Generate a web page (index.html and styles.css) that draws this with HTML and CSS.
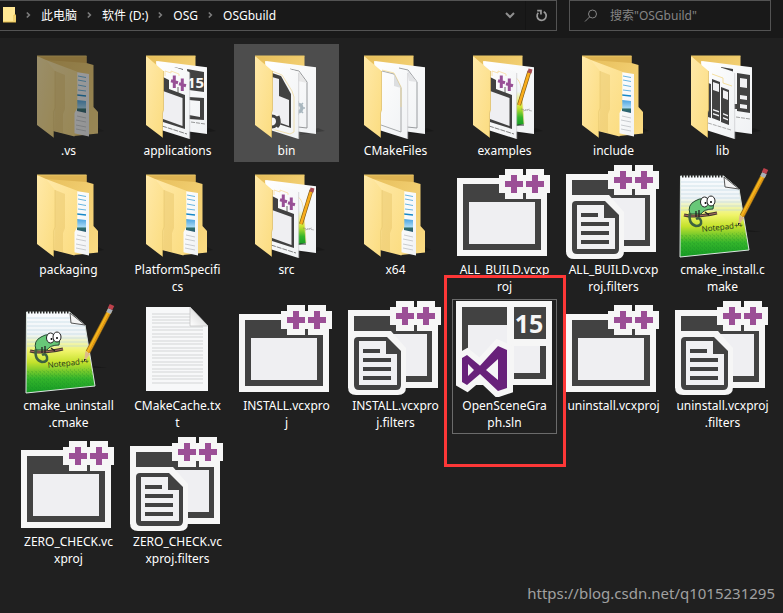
FILE: index.html
```html
<!DOCTYPE html>
<html lang="zh-CN">
<head>
<meta charset="utf-8">
<title>OSGbuild</title>
<link rel="stylesheet" href="styles.css">
</head>
<body>
<svg class="defs" aria-hidden="true">
  <defs>
    <linearGradient id="flap" x1="0" y1="0" x2="1" y2="1"><stop offset="0" stop-color="#ffe9a8"/><stop offset="1" stop-color="#fbdc80"/></linearGradient>
    <linearGradient id="back" x1="0" y1="0" x2="1" y2="1"><stop offset="0" stop-color="#e6bd59"/><stop offset="1" stop-color="#fbdc84"/></linearGradient>
    <linearGradient id="paper" x1="0" y1="0" x2="1" y2="1"><stop offset="0" stop-color="#ffffff"/><stop offset="1" stop-color="#f0f2f4"/></linearGradient>
    <linearGradient id="photo" x1="0" y1="0" x2="0" y2="1"><stop offset="0" stop-color="#4aa3df"/><stop offset=".6" stop-color="#a5d8f5"/><stop offset=".7" stop-color="#2f6f6a"/><stop offset="1" stop-color="#2a5a75"/></linearGradient>
    <linearGradient id="grass" x1="0" y1="0" x2="0" y2="1"><stop offset="0" stop-color="#fafcff"/><stop offset=".28" stop-color="#eff4f6"/><stop offset=".48" stop-color="#f0f46a"/><stop offset=".62" stop-color="#c5e22c"/><stop offset=".82" stop-color="#35b52c"/><stop offset="1" stop-color="#149a24"/></linearGradient>
    <linearGradient id="fold" x1="0" y1="1" x2="1" y2="0"><stop offset="0" stop-color="#ffffff"/><stop offset="1" stop-color="#c9c9c9"/></linearGradient>
    <pattern id="speck" width="4" height="4" patternUnits="userSpaceOnUse"><path d="M0 1h1M2 3h1M3 0h1" stroke="#0b7d1e" stroke-width="1" opacity=".35"/></pattern>

    <symbol id="folder-files" viewBox="0 0 105 96">
      <path d="M58 92l30-5-6-3z" fill="#191919"/>
      <path d="M21 12H70.500V19L77.500 21V63L82 68V89.500L58 92V60L21 20z" fill="url(#back)"/>
      <path d="M21 12H70.500V19L30 16z" fill="#ddb352"/>
      <path d="M60 28L73 30V92.500L57 89z" fill="url(#paper)"/>
      <path d="M62 32l8 1.500M62 36l8 1.500M62 41l8 1.500M62 46l8 1" stroke="#68b5e0"/>
      <path d="M61 51l9 1" stroke="#1688c9" stroke-width="1.500"/>
      <path d="M61 56l9 1V69l-9-2z" fill="url(#photo)"/>
      <path d="M61 72l9 2M60 76l10 2M60 81l10 2M60 85l10 2" stroke="#bcc0c4" stroke-width=".8"/>
      <path d="M30 16L61.300 27.700V64L58.500 69V92.500L37 87z" fill="url(#flap)"/>
      <path d="M39 27L49 31V65L47 70V89L38 87z" fill="#e6c467" opacity=".45"/>
      <path d="M21 12L30 16 39 27V64L37.500 68V93.600L21 81z" fill="url(#flap)"/>
      <path d="M39 27V64L37.500 68V93.600" fill="none" stroke="#e3c268" stroke-width=".5"/>
      <path d="M21 12H70.500" stroke="#e9c767"/>
    </symbol>

    <symbol id="folder-back" viewBox="0 0 105 96">
      <path d="M64 91l27-4-7-3z" fill="#000" opacity=".2"/>
      <path d="M21 12H70.500V30L37 60z" fill="url(#back)"/>
      <path d="M32 17L82 23.300V90L60 87z" fill="url(#paper)"/>
    </symbol>
    <symbol id="folder-sheet" viewBox="0 0 105 96">
      <path d="M31 17L64.500 28V95L36 86z" fill="url(#paper)"/>
      <path d="M64.700 29V95" stroke="#c9c9cb" stroke-width=".7"/>
    </symbol>
    <symbol id="folder-flap" viewBox="0 0 105 96">
      <path d="M21 12L38.500 27V66L37.500 69V93.500L21 81z" fill="url(#flap)"/>
      <path d="M38.500 27V66L37.500 69V93.500" fill="none" stroke="#dcba60" stroke-width=".7"/>
      <path d="M21 12H70.500" stroke="#e9c767"/>
    </symbol>
    <symbol id="mini-project" viewBox="0 0 105 96">
      <path d="M40 32v-5l6 2v-2l8 3v2" fill="none" stroke="#f8dda0" stroke-width=".8"/>
      <path d="M38 33L44 36V45L60 51V85L38 78z" fill="#414141"/>
      <path d="M38 47L57.500 54V82L38 75z" fill="#efeff2"/>
      <path d="M53 43v6" stroke="#414141" stroke-width=".8"/>
      <path d="M49.300 31.500V44M46 36.800l7 2M57.300 34.500V47M54 39.800l7 2" stroke="#985096" stroke-width="3"/>
      <path d="M37 82L62 90" stroke="#333" stroke-width=".6" stroke-dasharray="5 1"/>
    </symbol>
    <symbol id="mini-notepad" viewBox="0 0 105 96">
      <path d="M64 34q5 2 6 18l2 28-8 2z" fill="url(#grass)"/>
      <path d="M64 34q5 2 6 18l2 28" fill="none" stroke="#f2d98e" stroke-width=".7"/>
      <path d="M64 81l8 0" stroke="#333"/>
      <path d="M77.500 27L67 61" stroke="#7b591b" stroke-width="4"/>
      <path d="M77.500 27L67 61" stroke="#f8ad1b" stroke-width="2.600"/>
      <path d="M78.500 25l-1 4" stroke="#a84c54" stroke-width="4"/>
      <path d="M69 65l11 2M71 67l7-2" stroke="#777" stroke-width=".5" stroke-dasharray="3 1"/>
    </symbol>

    <symbol id="folder-solution" viewBox="0 0 105 96">
      <use href="#folder-back"/>
      <path d="M49 23l9 2v3l-9-3z" fill="#414141"/>
      <path d="M62 25L79 28V48L64 46z" fill="#414141"/>
      <text class="mini-version" x="62" y="44">15</text>
      <path d="M64 53L79 54V76L64 75V71L75 73V57L64 56z" fill="#414141"/>
      <path d="M66 78l14 2" stroke="#555" stroke-width=".6" stroke-dasharray="4 1"/>
      <use href="#folder-sheet"/><use href="#mini-project"/><use href="#folder-flap"/>
    </symbol>
    <symbol id="folder-bin" viewBox="0 0 105 96">
      <use href="#folder-back"/>
      <path d="M56 25l9 2 8 11v46l-9-1" fill="none" stroke="#8b8d90" stroke-width=".9"/>
      <path d="M64 27l9 12-9-2z" fill="#e8e8e8"/>
      <circle cx="64" cy="64" r="4" fill="none" stroke="#a9b7bf" stroke-width="3"/>
      <path d="M64 57v14M57 64h14M59 59l10 10M69 59L59 69" stroke="#a9b7bf" stroke-width="1.500"/>
      <circle cx="64" cy="64" r="2" fill="#f4f5f6"/>
      <use href="#folder-sheet"/>
      <path d="M38 27l10 4 10 16 2 6v35l-4 2-18-5" fill="none" stroke="#eed693" stroke-width=".7"/>
      <path d="M38 29l9 3 10 18v34l-19-6z" fill="#414141"/>
      <path d="M38 33l7 2v17l10 4v26l-17-6z" fill="#efeff2"/>
      <circle cx="38" cy="77" r="9" fill="#f5f5f6"/>
      <path d="M38 72a5 5 0 0 1 0 11M43 83q4-4 1-11" fill="none" stroke="#414141" stroke-width="3"/>
      <use href="#folder-flap"/>
    </symbol>
    <symbol id="folder-cmake" viewBox="0 0 105 96">
      <use href="#folder-back"/>
      <path d="M56 24l9 2 9 12v46l-10-1" fill="none" stroke="#909396" stroke-width=".9"/>
      <path d="M64 26l10 12-8-1z" fill="#e2e3e5"/>
      <use href="#folder-sheet"/>
      <path d="M39 27l12 3 7 14v44l-20-7" fill="none" stroke="#929598" stroke-width=".8"/>
      <path d="M39 26l12 3 7 14v20" fill="none" stroke="#f4d98a" stroke-width=".7"/>
      <path d="M51 30v12l7 2z" fill="#dcdee0"/>
      <use href="#folder-flap"/>
    </symbol>
    <symbol id="folder-source" viewBox="0 0 105 96">
      <use href="#folder-back"/><use href="#mini-notepad"/><use href="#folder-sheet"/><use href="#mini-project"/><use href="#folder-flap"/>
    </symbol>
    <symbol id="folder-lib" viewBox="0 0 105 96">
      <use href="#folder-back"/>
      <path d="M51 23l12 2v5l-12-4zM67 29l13 2v38l-13-2zM64 60h3v5h-3z" fill="#414141"/>
      <path d="M70 34l7 1v9l-7-1zM70 51l7 1v4l-7-1zM70 60l7 1v4l-7-1z" fill="#f1f1f3"/>
      <path d="M66 73l14 2" stroke="#666" stroke-width=".6" stroke-dasharray="4 1"/>
      <use href="#folder-sheet"/>
      <path d="M38 39l3 1v34l-3-1zM42 35l8 3v39l-8-3zM51 43l8 3v35l-8-3z" fill="#414141"/>
      <path d="M43 38l6 2v8l-6-2zM53 46l5 2v8l-5-2zM43 65l6 2v1.500l-6-2zM43 69l6 2v1.500l-6-2zM53 69l5 2v1.500l-5-2zM53 73l5 2v1.500l-5-2z" fill="#f1f1f3"/>
      <path d="M42 30l11 4v5l9 3" fill="none" stroke="#f4d98a" stroke-width=".8"/>
      <path d="M38 79l23 7" stroke="#777" stroke-width=".6" stroke-dasharray="4 1"/>
      <use href="#folder-flap"/>
    </symbol>

    <symbol id="plusplus" viewBox="0 0 105 96">
      <path d="M53 6H71V12H74V6H92V12H98V30H92V36H74V30H71V36H53V30H47V12H53z" fill="#f6f6f6"/>
      <path d="M59 12H65V18H71V24H65V30H59V24H53V18H59zM80 12H86V18H92V24H86V30H80V24H74V18H80z" fill="#9b4f96"/>
    </symbol>
    <symbol id="project" viewBox="0 0 105 96">
      <path d="M5 15H95V93H5z" fill="#f6f6f6"/><path d="M11 21H89V87H11z" fill="#424242"/><path d="M17 39H83V81H17z" fill="#efeff2"/>
      <use href="#plusplus"/>
    </symbol>
    <symbol id="filters" viewBox="0 0 105 96">
      <path d="M5 11H95V89H5z" fill="#f6f6f6"/><path d="M11 17H89V83H11z" fill="#424242"/><path d="M17 35H84V77H17z" fill="#efeff2"/>
      <path d="M11 32H48L63 49V88Q63 96 55 96H13Q5 96 5 88V32z" fill="#f6f6f6"/>
      <path d="M15 38H44L58 52V86Q58 91 53 91H16Q11 91 11 86V42Q11 38 15 38z" fill="#424242"/>
      <path d="M16 42H43V55H54V86H16z" fill="#f1f1f3"/>
      <path d="M20 50H37V54H20zM20 59H48V63H20zM20 68H48V72H20zM20 77H48V81H20z" fill="#424242"/>
      <use href="#plusplus" y="-4"/>
    </symbol>
    <symbol id="solution" viewBox="0 0 105 98">
      <path d="M4 2H100V86H4z" fill="#f6f6f6"/><path d="M10 8H94V80H10z" fill="#424242"/><path d="M16 26H88V74H16z" fill="#efeff2"/>
      <path d="M55 2H100V47H55z" fill="#f6f6f6"/><path d="M62 8H94V40H62z" fill="#424242"/>
      <path d="M55 40H62V86H55z" fill="#f6f6f6"/>
      <text class="version" x="77" y="34">15</text>
      <path d="M10 59L15 56 28 66.700 46 47 55 51V89L46 92 28 75 15 86 10 83z" fill="#f6f6f6" stroke="#f6f6f6" stroke-width="12"/>
      <path fill-rule="evenodd" d="M10 59L15 56 28 66.700 46 47 55 51V89L46 92 28 75 15 86 10 83zM16 65V77L22 71zM46 60L34 71 46 81z" fill="#68217a"/>
    </symbol>
    <symbol id="notepad" viewBox="0 0 105 96">
      <path d="M65 65l26 4-20 0z" fill="#191919"/>
      <path d="M10.500 13H53.500L69 26 79 87 10 94z" fill="url(#grass)" stroke="#dbe5e0"/>
      <path d="M11 72l65-3 2 17-67 7z" fill="url(#speck)"/>
      <path d="M11 19h46M11 23h50M11 27h58M11 31h58M11 35h59M11 39h60M11 43h60M11 47h61" stroke="#b9d3e0" stroke-width=".6"/>
      <path d="M12 13h41" stroke="#292929" stroke-width="3" stroke-dasharray="1.500 1.500"/>
      <path d="M54 14l1 10 14 2z" fill="#f4f4f4" stroke="#555"/>
      <path d="M14 52q11 3 33-2" fill="none" stroke="#443a30" stroke-width="3"/>
      <path d="M14 52q11 3 33-2" fill="none" stroke="#aa6d62" stroke-width="1"/>
      <path d="M20 51q-3-9 5-13 8-5 16 0 4 3 2 8-9 0-12 5z" fill="#68c878" stroke="#244b31"/>
      <path d="M20 50q-2 11 6 13 6 0 5-5-1-4-5-2" fill="none" stroke="#3d6240" stroke-width="2.500"/>
      <path d="M26 48v6m3-7v7m6-5l4 3" stroke="#222" stroke-width="1.300"/>
      <ellipse cx="34.500" cy="39" rx="4" ry="5" fill="#fff" stroke="#222"/>
      <ellipse cx="41" cy="38" rx="4" ry="5" fill="#fff" stroke="#222"/>
      <circle cx="35.500" cy="40" r="1"/><circle cx="41" cy="39" r="1"/>
      <text class="notepad-word" x="32" y="69" transform="rotate(-6 32 69)">Notepad++</text>
      <path d="M94 11L72 53" stroke="#9c7018" stroke-width="5"/><path d="M94 11L72 53" stroke="#f4b41b" stroke-width="3.500"/>
      <path d="M93 15L72 55" stroke="#de8c12"/>
      <path d="M69.500 52l4.500 3-6 8z" fill="#deb98a"/><path d="M68 60l2 0-2 3z" fill="#222"/>
      <path d="M94.500 10l-2 4" stroke="#a8b0b8" stroke-width="5"/><path d="M96 6l-2 4" stroke="#bd414b" stroke-width="5"/>
    </symbol>
    <symbol id="textfile" viewBox="0 0 105 96">
      <path d="M21 8H65L83 27V92H21z" fill="#f7f8f9"/>
      <path d="M27 15H65M27 18H65M27 21H65M27 24H65M27 28H78M27 31H78M27 35H78M27 38H78M27 42H78M27 45H78M27 49H78M27 52H78M27 56H78M27 59H78M27 63H78M27 66H78M27 70H78M27 73H78M27 77H78M27 80H78M27 84H78" stroke="#d3d5d6"/>
      <path d="M65 8V27H83z" fill="url(#fold)" stroke="#c0c0c0" stroke-width=".7"/>
    </symbol>
  </defs>
</svg>

<header class="toolbar">
  <nav class="address" aria-label="地址">
    <svg class="address-folder" viewBox="0 0 13 18" aria-hidden="true"><path d="M0 1H12V9H13V16H0z" fill="#ffe794"/><path d="M0 16H13V9H11V15" fill="none" stroke="#e4bc4e"/></svg>
    <svg class="chevron" viewBox="0 0 6 8"><path d="M1 1l3 3-3 3"/></svg>
    <a href="#">此电脑</a>
    <svg class="chevron" viewBox="0 0 6 8"><path d="M1 1l3 3-3 3"/></svg>
    <a href="#">软件 (D:)</a>
    <svg class="chevron" viewBox="0 0 6 8"><path d="M1 1l3 3-3 3"/></svg>
    <a href="#">OSG</a>
    <svg class="chevron" viewBox="0 0 6 8"><path d="M1 1l3 3-3 3"/></svg>
    <a href="#">OSGbuild</a>
    <button class="tool history" aria-label="历史记录"><svg viewBox="0 0 12 12" width="12" height="12"><path d="M2 4l4 4 4-4" fill="none" stroke="#8f8f8f" stroke-width="2"/></svg></button>
    <button class="tool refresh" aria-label="刷新"><svg viewBox="0 0 12 12" width="13" height="13"><path d="M8 2.500A4.200 4.200 0 1 1 3 3.500M2 1.500H5.500V5" fill="none" stroke="#9a9a9a" stroke-width="1.600"/></svg></button>
  </nav>
  <label class="search">
    <svg viewBox="0 0 14 14" width="14" height="14" aria-hidden="true"><circle cx="8.500" cy="5" r="4" fill="none" stroke="#858585"/><path d="M5.500 8L1 12.500" stroke="#858585"/></svg>
    <input type="text" aria-label="搜索" placeholder='搜索"OSGbuild"'>
  </label>
</header>

<main class="files-pane">
  <ul class="files">
    <li><button class="file hidden-file"><svg class="icon" viewBox="0 0 105 96"><use href="#folder-files"/></svg><span>.vs</span></button></li>
    <li><button class="file"><svg class="icon" viewBox="0 0 105 96"><use href="#folder-solution"/></svg><span>applications</span></button></li>
    <li><button class="file hovered"><svg class="icon" viewBox="0 0 105 96"><use href="#folder-bin"/></svg><span>bin</span></button></li>
    <li><button class="file"><svg class="icon" viewBox="0 0 105 96"><use href="#folder-cmake"/></svg><span>CMakeFiles</span></button></li>
    <li><button class="file"><svg class="icon" viewBox="0 0 105 96"><use href="#folder-source"/></svg><span>examples</span></button></li>
    <li><button class="file"><svg class="icon" viewBox="0 0 105 96"><use href="#folder-files"/></svg><span>include</span></button></li>
    <li><button class="file"><svg class="icon" viewBox="0 0 105 96"><use href="#folder-lib"/></svg><span>lib</span></button></li>

    <li><button class="file"><svg class="icon" viewBox="0 0 105 96"><use href="#folder-files"/></svg><span>packaging</span></button></li>
    <li><button class="file"><svg class="icon" viewBox="0 0 105 96"><use href="#folder-files"/></svg><span>PlatformSpecifi<br>cs</span></button></li>
    <li><button class="file"><svg class="icon" viewBox="0 0 105 96"><use href="#folder-source"/></svg><span>src</span></button></li>
    <li><button class="file"><svg class="icon" viewBox="0 0 105 96"><use href="#folder-files"/></svg><span>x64</span></button></li>
    <li><button class="file"><svg class="icon" viewBox="0 0 105 96"><use href="#project"/></svg><span>ALL_BUILD.vcxp<br>roj</span></button></li>
    <li><button class="file"><svg class="icon" viewBox="0 0 105 96"><use href="#filters"/></svg><span>ALL_BUILD.vcxp<br>roj.filters</span></button></li>
    <li><button class="file"><svg class="icon" viewBox="0 0 105 96"><use href="#notepad"/></svg><span>cmake_install.c<br>make</span></button></li>

    <li><button class="file"><svg class="icon" viewBox="0 0 105 96"><use href="#notepad"/></svg><span>cmake_uninstall<br>.cmake</span></button></li>
    <li><button class="file"><svg class="icon" viewBox="0 0 105 96"><use href="#textfile"/></svg><span>CMakeCache.tx<br>t</span></button></li>
    <li><button class="file"><svg class="icon" viewBox="0 0 105 96"><use href="#project"/></svg><span>INSTALL.vcxpro<br>j</span></button></li>
    <li><button class="file"><svg class="icon" viewBox="0 0 105 96"><use href="#filters"/></svg><span>INSTALL.vcxpro<br>j.filters</span></button></li>
    <li class="marked"><button class="file focused"><svg class="icon" viewBox="0 0 105 96"><use href="#solution" width="105" height="98"/></svg><span>OpenSceneGra<br>ph.sln</span></button></li>
    <li><button class="file"><svg class="icon" viewBox="0 0 105 96"><use href="#project"/></svg><span>uninstall.vcxproj</span></button></li>
    <li><button class="file"><svg class="icon" viewBox="0 0 105 96"><use href="#filters"/></svg><span>uninstall.vcxproj<br>.filters</span></button></li>

    <li><button class="file"><svg class="icon" viewBox="0 0 105 96"><use href="#project"/></svg><span>ZERO_CHECK.vc<br>xproj</span></button></li>
    <li><button class="file"><svg class="icon" viewBox="0 0 105 96"><use href="#filters"/></svg><span>ZERO_CHECK.vc<br>xproj.filters</span></button></li>
  </ul>
  <p class="watermark">https://blog.csdn.net/q1015231295</p>
</main>
</body>
</html>
```

FILE: styles.css
```css
* { box-sizing: border-box; }

body {
  margin: 0;
  min-height: 100vh;
  display: flex;
  flex-direction: column;
  background: #202020;
  color: #fff;
  font: 12px/17px "Noto Sans", "Noto Sans CJK SC", sans-serif;
}

button, input { font: inherit; color: inherit; }

.defs {
  position: absolute;
  width: 0;
  height: 0;
}

.toolbar {
  display: flex;
  gap: 12px;
  padding: 0 12px 7px 0;
  background: #191919;
}

.address {
  flex: 1;
  display: flex;
  align-items: center;
  height: 31px;
  padding: 0 0 1px 3px;
  border: 1px solid #535353;
  border-left: 0;
}

.address a { color: #fff; text-decoration: none; }

.address-folder { width: 13px; height: 18px; }

.chevron {
  width: 5px;
  height: 8px;
  margin: 0 10px;
  fill: none;
  stroke: #7c7c7c;
  stroke-width: 2;
}

.tool {
  display: grid;
  place-items: center;
  width: 31px;
  height: 29px;
  padding: 0;
  border: 0;
  background: none;
}

.history { margin-left: auto; }

.refresh { border-left: 1px solid #141414; }

.search {
  display: flex;
  align-items: center;
  gap: 12px;
  width: 202px;
  height: 31px;
  padding: 0 14px;
  border: 1px solid #535353;
}

.search input {
  flex: 1;
  min-width: 0;
  padding: 0;
  border: 0;
  outline: 0;
  background: none;
}

.search input::placeholder { color: #858585; opacity: 1; }

.files-pane {
  flex: 1;
  display: flex;
  flex-direction: column;
}

.files {
  display: grid;
  grid-template-columns: repeat(auto-fill, 105px);
  align-items: start;
  gap: 1px 4px;
  margin: 0;
  padding: 6px 0 0 16px;
  list-style: none;
}

.file {
  display: flex;
  flex-direction: column;
  gap: 2px;
  width: 100%;
  padding: 0 0 3px;
  border: 0;
  background: none;
  text-align: center;
}

.file span {
  align-self: center;
  white-space: nowrap;
}

.icon {
  display: block;
  width: 100%;
  height: 96px;
  overflow: visible;
}

.hidden-file .icon { opacity: 0.55; }

.hovered { background: #4d4d4d; }

.focused { box-shadow: inset 0 0 0 1px #6b6b6b; }

.marked { position: relative; }

.marked::after {
  content: "";
  position: absolute;
  inset: -24px -9px -33px -8px;
  border: 3px solid #fd3737;
  pointer-events: none;
}

.version {
  font: bold 25px "Open Sans", sans-serif;
  fill: #f6f6f6;
  text-anchor: middle;
}

.mini-version {
  font: bold 15px "Open Sans", sans-serif;
  fill: #f6f6f6;
}

.notepad-word {
  font: 8px "Open Sans", sans-serif;
  fill: #23351b;
}

.watermark {
  margin: auto 8px 9px auto;
  color: #a0a0a0;
  font-size: 15px;
  line-height: 22px;
}
```
